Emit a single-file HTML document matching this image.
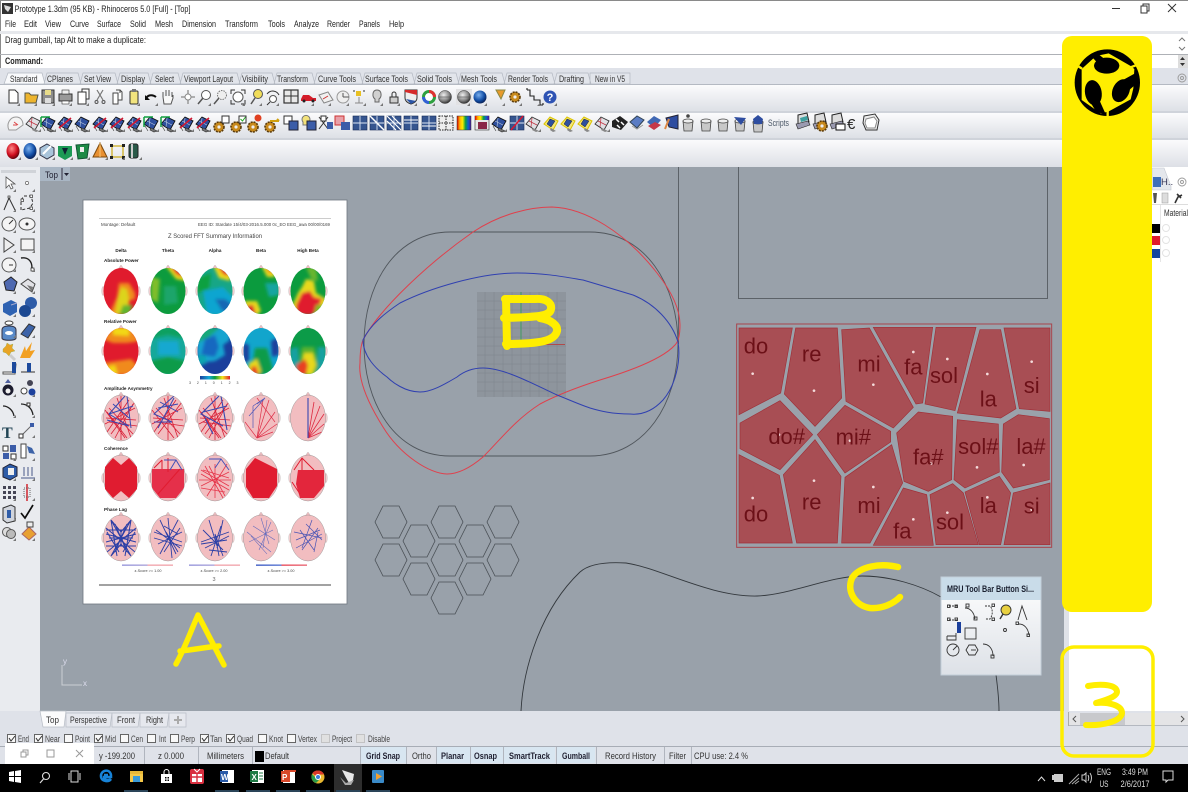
<!DOCTYPE html>
<html><head><meta charset="utf-8"><title>Prototype</title>
<style>
html,body{margin:0;padding:0;background:#fff;width:1188px;height:792px;overflow:hidden}
svg{display:block;filter:blur(.35px)}
text{font-family:"Liberation Sans",sans-serif;fill:#222}
.m{font-size:9.5px}
.t{font-size:9px;fill:#333}
.o{font-size:9px;fill:#444}
.s{font-size:9.5px;fill:#333}
.b{font-size:9.5px;font-weight:bold;fill:#223}
.h{font-size:4.6px;font-weight:bold;fill:#222}
.n{font-size:66px;fill:#6c1017;text-anchor:middle}
</style></head><body>
<svg width="1188" height="792" viewBox="0 0 1188 792" xmlns="http://www.w3.org/2000/svg">
<defs>
<linearGradient id="tb" x1="0" y1="0" x2="0" y2="1"><stop offset="0" stop-color="#fbfbfc"/><stop offset="1" stop-color="#dde0e6"/></linearGradient>
<linearGradient id="pop" x1="0" y1="0" x2="0" y2="1"><stop offset="0" stop-color="#fff"/><stop offset="1" stop-color="#dde1e7"/></linearGradient>
<linearGradient id="cb" x1="0" y1="0" x2="1" y2="0"><stop offset="0" stop-color="#1a3f9c"/><stop offset=".3" stop-color="#12a9d8"/><stop offset=".5" stop-color="#0a9c3c"/><stop offset=".75" stop-color="#f6e61a"/><stop offset="1" stop-color="#e01b2d"/></linearGradient>
<linearGradient id="rb" x1="0" y1="0" x2="1" y2="0"><stop offset="0" stop-color="#dd0000"/><stop offset=".2" stop-color="#ffb000"/><stop offset=".4" stop-color="#ffee00"/><stop offset=".6" stop-color="#10a040"/><stop offset=".8" stop-color="#1060d0"/><stop offset="1" stop-color="#501090"/></linearGradient>
<linearGradient id="lg1" x1="0" y1="0" x2="1" y2="0"><stop offset="0" stop-color="#8e8ed8"/><stop offset=".5" stop-color="#a8a0d8"/><stop offset=".5" stop-color="#f0a0a8"/><stop offset="1" stop-color="#f0a0a8"/></linearGradient>
<linearGradient id="lg2" x1="0" y1="0" x2="1" y2="0"><stop offset="0" stop-color="#3050c0"/><stop offset=".5" stop-color="#5070d0"/><stop offset=".5" stop-color="#e8404f"/><stop offset="1" stop-color="#e8606f"/></linearGradient>
<radialGradient id="sg" cx=".4" cy=".35" r=".7"><stop offset="0" stop-color="#eee"/><stop offset=".6" stop-color="#888"/><stop offset="1" stop-color="#222"/></radialGradient>
<radialGradient id="sb" cx=".4" cy=".35" r=".7"><stop offset="0" stop-color="#7ab0ee"/><stop offset=".6" stop-color="#1450a8"/><stop offset="1" stop-color="#04184a"/></radialGradient>
<radialGradient id="sr" cx=".4" cy=".35" r=".7"><stop offset="0" stop-color="#f88"/><stop offset=".6" stop-color="#d01020"/><stop offset="1" stop-color="#500008"/></radialGradient>
<filter id="bl" x="-20%" y="-20%" width="140%" height="140%"><feGaussianBlur stdDeviation="1.500"/></filter>
<filter id="sf" x="-5%" y="-5%" width="110%" height="110%"><feGaussianBlur stdDeviation=".3"/></filter>
<clipPath id="hc"><ellipse cx="0" cy="0" rx="17.5" ry="23"/></clipPath>

<path id="fl" d="M8 8H5L8 5Z" fill="#777"/>
<g id="srf"><path d="M-7 0L-1-7 7-3 2 6Z" fill="#2f4f9e" stroke="#111" stroke-width=".9"/><path d="M-4-3L4 1M-1-6L-2 3" stroke="#bcd" stroke-width=".6" fill="none"/><path d="M0 4L6 7 3 8-1 6ZM-6 2L-3 7" fill="#777" stroke="#333" stroke-width=".6"/><use href="#fl"/></g>
<g id="srfr"><use href="#srf"/><path d="M-6 4L6-6" stroke="#d01830" stroke-width="1.600"/></g>
<g id="srfg"><use href="#srf"/><path d="M-7-7H2M-7-7V3" stroke="#10a040" stroke-width="1.500" fill="none"/></g>
<g id="srfy"><path d="M-7 0L-1-7 7-3 2 6Z" fill="#f3e67a" stroke="#dcc400" stroke-width="1"/><path d="M-4 0L-1-5 4-3 0 3Z" fill="#2f4f9e" stroke="#222" stroke-width=".5"/><path d="M0 4L5 7 2 8-1 6Z" fill="#888"/></g>
<g id="srfw"><path d="M-7 0L-1-7 7-3 2 6Z" fill="#e0e0e4" stroke="#333" stroke-width=".9"/><path d="M-4-3L4 1M-1-6L-2 3" stroke="#c03040" stroke-width=".7" fill="none"/><path d="M0 4L6 7 3 8-1 6Z" fill="#888"/><use href="#fl"/></g>
<g id="grd"><rect x="-7" y="-7" width="14" height="14" fill="#34558f" stroke="#1a2b55" stroke-width=".6"/><path d="M0-7V7M-7 0H7" stroke="#dde6f4" stroke-width=".9"/></g>
<g id="gear"><circle cx="0" cy="0" r="5" fill="#c88a1e" stroke="#5a3a08" stroke-width="1.600" stroke-dasharray="2 1"/><circle cx="0" cy="0" r="1.600" fill="#eee"/></g>
<g id="cup"><path d="M-5-3H5L4 7H-4Z" fill="#c8c8c8" stroke="#444" stroke-width=".8"/><ellipse cx="0" cy="-3" rx="5" ry="2" fill="#eee" stroke="#444" stroke-width=".7"/></g>
<g id="hd"><path d="M-2.5-22.5L0-26 2.5-22.5Z" fill="#f2bdc0" stroke="#999" stroke-width=".3"/><ellipse cx="-18" cy="0" rx="1.300" ry="4.500" fill="#f4cfd0" stroke="#aaa" stroke-width=".3"/><ellipse cx="18" cy="0" rx="1.300" ry="4.500" fill="#f4cfd0" stroke="#aaa" stroke-width=".3"/><ellipse cx="0" cy="0" rx="17.5" ry="23" fill="#f2bdc0" stroke="#888" stroke-width=".4"/></g>
<g id="hm"><path d="M-2.5-22.5L0-26 2.5-22.5Z" fill="#f2bdc0" stroke="#999" stroke-width=".3"/><ellipse cx="-18" cy="0" rx="1.300" ry="4.500" fill="#f4cfd0" stroke="#aaa" stroke-width=".3"/><ellipse cx="18" cy="0" rx="1.300" ry="4.500" fill="#f4cfd0" stroke="#aaa" stroke-width=".3"/></g>
<path id="hex" d="M-16 0L-8-16H8L16 0 8 16H-8Z" fill="none" stroke="#4a5056" stroke-width=".8"/>
</defs>

<!-- base -->
<rect width="1188" height="792" fill="#fff"/>
<rect y="0" width="1188" height="1" fill="#8a8a8a"/>
<rect x="0" y="0" width="1" height="764" fill="#8a8a8a"/>
<rect y="31" width="1188" height="3" fill="#e6e8ec"/>
<rect y="54" width="1188" height="1" fill="#aeb1b6"/>
<rect y="68" width="1188" height="17" fill="#dfe2e9"/>
<rect y="84" width="1188" height="1" fill="#b4b9c2"/>
<rect y="85" width="1188" height="26" fill="url(#tb)"/>
<rect y="111" width="1188" height="2" fill="#cfd3da"/>
<rect y="113" width="1188" height="25" fill="url(#tb)"/>
<rect y="138" width="1188" height="2" fill="#cfd3da"/>
<rect y="140" width="1188" height="27" fill="url(#tb)"/>
<rect y="167" width="40" height="544" fill="#e9ebef"/>
<rect x="1" y="170" width="35" height="3" fill="#d0d3d8"/>
<rect x="40" y="167" width="1024" height="544" fill="#99a1aa"/>
<rect x="1064" y="167" width="5" height="558" fill="#dfe2e8"/>
<rect x="1069" y="167" width="119" height="558" fill="#fff"/>
<rect y="711" width="1188" height="36" fill="#dfe2e9"/>
<rect x="1069" y="713" width="119" height="12" fill="#e4e4e6"/>
<rect x="1080" y="713" width="45" height="12" fill="#c8c9cc"/>
<rect x="1068" y="712" width="1" height="14" fill="#aaa"/>
<rect x="1069" y="725" width="119" height="1" fill="#b4b8c0"/>
<path d="M1076 716l-3 3 3 3M1181 716l3 3-3 3" stroke="#555" fill="none"/>
<rect y="746" width="1188" height="18" fill="#dfe2e9"/>
<rect y="746" width="1188" height="1" fill="#a8adb6"/>

<!-- title / menu -->
<g>
<rect x="2" y="3" width="11" height="11" fill="#333"/><path d="M4 5L11 7 8 12 5 9Z" fill="#ddd"/>
<text class="m" x="14.500" y="12" textLength="176" lengthAdjust="spacingAndGlyphs">Prototype 1.3dm (95 KB) - Rhinoceros 5.0 [Full] - [Top]</text>
<path d="M1112 8.500h8" stroke="#333"/><path d="M1141 6h6v7h-6zM1143 6V4h6v7h-2" stroke="#333" fill="#fff"/><path d="M1168 4l8 8M1176 4l-8 8" stroke="#333"/>
<text class="m" x="5" y="27" textLength="11" lengthAdjust="spacingAndGlyphs">File</text>
<text class="m" x="24" y="27" textLength="13" lengthAdjust="spacingAndGlyphs">Edit</text>
<text class="m" x="45" y="27" textLength="16" lengthAdjust="spacingAndGlyphs">View</text>
<text class="m" x="70" y="27" textLength="19" lengthAdjust="spacingAndGlyphs">Curve</text>
<text class="m" x="97" y="27" textLength="24" lengthAdjust="spacingAndGlyphs">Surface</text>
<text class="m" x="130" y="27" textLength="16" lengthAdjust="spacingAndGlyphs">Solid</text>
<text class="m" x="155" y="27" textLength="18" lengthAdjust="spacingAndGlyphs">Mesh</text>
<text class="m" x="182" y="27" textLength="34" lengthAdjust="spacingAndGlyphs">Dimension</text>
<text class="m" x="225" y="27" textLength="33" lengthAdjust="spacingAndGlyphs">Transform</text>
<text class="m" x="268" y="27" textLength="17" lengthAdjust="spacingAndGlyphs">Tools</text>
<text class="m" x="294" y="27" textLength="25" lengthAdjust="spacingAndGlyphs">Analyze</text>
<text class="m" x="327" y="27" textLength="23" lengthAdjust="spacingAndGlyphs">Render</text>
<text class="m" x="359" y="27" textLength="21" lengthAdjust="spacingAndGlyphs">Panels</text>
<text class="m" x="389" y="27" textLength="15" lengthAdjust="spacingAndGlyphs">Help</text>
<text class="m" x="5" y="43" textLength="141" lengthAdjust="spacingAndGlyphs">Drag gumball, tap Alt to make a duplicate:</text>
<text class="m" x="5" y="64" textLength="38" lengthAdjust="spacingAndGlyphs" style="font-weight:bold">Command:</text>
<path d="M1179 41l3-3 3 3M1179 47l3 3 3-3" stroke="#777" fill="none"/>
<rect x="1178" y="55" width="10" height="13" fill="#ddd"/><path d="M1180 60l2.500-3 2.500 3ZM1180 63l2.500 3 2.500-3Z" fill="#333"/>
</g>

<!-- tabs -->
<g>
<path d="M4 84L8 73H42L45 84Z" fill="#f8f9fb" stroke="#b4b9c2" stroke-width=".7"/>
<path d="M44 84L47 73H78L81 84ZM80 84L83 73H115L118 84ZM117 84L120 73H148L151 84ZM150 84L153 73H178L181 84ZM180 84L183 73H237L240 84ZM239 84L242 73H272L275 84ZM274 84L277 73H312L315 84ZM314 84L317 73H360L363 84ZM362 84L365 73H412L415 84ZM414 84L417 73H456L459 84ZM458 84L461 73H502L505 84ZM504 84L507 73H552L555 84ZM554 84L557 73H588L591 84ZM590 84V73H630V84Z" fill="#e2e5eb" stroke="#b4b9c2" stroke-width=".7"/>
<text class="t" x="10" y="82" textLength="27.500" lengthAdjust="spacingAndGlyphs">Standard</text>
<text class="t" x="47" y="82" textLength="26" lengthAdjust="spacingAndGlyphs">CPlanes</text>
<text class="t" x="84" y="82" textLength="27" lengthAdjust="spacingAndGlyphs">Set View</text>
<text class="t" x="121" y="82" textLength="24" lengthAdjust="spacingAndGlyphs">Display</text>
<text class="t" x="155" y="82" textLength="19" lengthAdjust="spacingAndGlyphs">Select</text>
<text class="t" x="184" y="82" textLength="49" lengthAdjust="spacingAndGlyphs">Viewport Layout</text>
<text class="t" x="242" y="82" textLength="26" lengthAdjust="spacingAndGlyphs">Visibility</text>
<text class="t" x="277" y="82" textLength="31" lengthAdjust="spacingAndGlyphs">Transform</text>
<text class="t" x="318" y="82" textLength="38" lengthAdjust="spacingAndGlyphs">Curve Tools</text>
<text class="t" x="365" y="82" textLength="43" lengthAdjust="spacingAndGlyphs">Surface Tools</text>
<text class="t" x="417" y="82" textLength="35" lengthAdjust="spacingAndGlyphs">Solid Tools</text>
<text class="t" x="461" y="82" textLength="36" lengthAdjust="spacingAndGlyphs">Mesh Tools</text>
<text class="t" x="508" y="82" textLength="40" lengthAdjust="spacingAndGlyphs">Render Tools</text>
<text class="t" x="559" y="82" textLength="25" lengthAdjust="spacingAndGlyphs">Drafting</text>
<text class="t" x="595" y="82" textLength="30" lengthAdjust="spacingAndGlyphs">New in V5</text>
<g fill="none" stroke="#999" stroke-width=".9"><circle cx="1182" cy="78" r="4"/><circle cx="1182" cy="78" r="1.500"/><circle cx="1182" cy="182" r="4"/><circle cx="1182" cy="182" r="1.500"/></g>
</g>

<!-- toolbar row 1 -->
<g filter="url(#sf)">
<path d="M9 90h6l3 3v10H9Z" fill="#fff" stroke="#333"/>
<path d="M25 93h4l2 2h7l-2 8H25Z" fill="#edb42e" stroke="#554"/>
<rect x="42" y="90" width="12" height="13" fill="#8d8d8d" stroke="#333"/><rect x="45" y="90" width="6" height="5" fill="#e8dc8a"/><rect x="45" y="98" width="6" height="5" fill="#ddd"/>
<rect x="59" y="94" width="13" height="7" fill="#999" stroke="#333"/><rect x="62" y="90" width="7" height="4" fill="#eee" stroke="#333" stroke-width=".6"/><rect x="62" y="101" width="7" height="3" fill="#fff" stroke="#333" stroke-width=".6"/>
<path d="M78 92h8v12h-8ZM82 92v-3h7v10h-3" fill="#fff" stroke="#333"/>
<path d="M97 90l6 10M103 90l-6 10" stroke="#777" stroke-width="1.200"/><circle cx="96.500" cy="102" r="1.500" fill="none" stroke="#555"/><circle cx="103.500" cy="102" r="1.500" fill="none" stroke="#555"/>
<path d="M113 93h5v11h-5ZM116 90h4v3M120 90l2 2v8h-4" fill="#fff" stroke="#444"/>
<rect x="130" y="91" width="8" height="13" rx="1" fill="#f2e47e" stroke="#333"/><rect x="132" y="89" width="4" height="3" fill="#777"/>
<path d="M146 99c1-4 6-5 10-2" fill="none" stroke="#111" stroke-width="2"/><path d="M145 95v5h5Z" fill="#111"/>
<path d="M163 97v-5M166 96v-6M169 96v-6M172 97v-5M163 97l1 7h7l2-6v-3" fill="#f8f8f8" stroke="#555"/>
<path d="M188 90v14M181 97h14" stroke="#999" stroke-width="1.500"/><circle cx="188" cy="97" r="3" fill="#fff" stroke="#888"/>
<circle cx="206" cy="95" r="4.500" fill="#fff" stroke="#555"/><path d="M203 98l-5 6" stroke="#555" stroke-width="1.500"/>
<circle cx="222" cy="95" r="4.500" fill="#eee" stroke="#777" stroke-dasharray="1.500 1"/><path d="M219 98l-5 6" stroke="#555" stroke-width="1.500"/>
<circle cx="238" cy="97" r="5" fill="#fff" stroke="#555"/><path d="M231 94v-4h4M245 94v-4h-4M231 100v4h4M245 100v4h-4" stroke="#333" fill="none"/>
<circle cx="258" cy="94" r="4.500" fill="#f1dd5a" stroke="#555"/><path d="M255 98l-4 6" stroke="#555" stroke-width="1.500"/>
<path d="M267 94c4-5 10-3 12 1" fill="none" stroke="#333"/><circle cx="273" cy="99" r="3.500" fill="#fff" stroke="#555"/><path d="M270 102l-3 3" stroke="#333"/>
<rect x="284" y="90" width="14" height="13" fill="#e8e8e8" stroke="#333" stroke-width="1.200"/><path d="M291 90v13M284 96h14" stroke="#333"/>
<path d="M301 99l2-4h6l4 3h3v3h-15Z" fill="#d41f2c"/><circle cx="304" cy="101" r="1.500" fill="#222"/><circle cx="313" cy="101" r="1.500" fill="#222"/>
<path d="M319 95l9-3 5 8-9 3Z" fill="#f0f0f0" stroke="#888"/><path d="M323 99l5-3" stroke="#c33"/>
<circle cx="343" cy="97" r="6" fill="#eee" stroke="#999"/><path d="M343 97h6M343 93v4" stroke="#555"/>
<rect x="356" y="91" width="5" height="5" fill="#e8c020"/><path d="M359 97v6M355 103h8" stroke="#888"/><path d="M364 90v2M354 90v2" stroke="#333"/>
<path d="M377 90c-5 0-5 7-2 9v3h4v-3c3-2 3-9-2-9Z" fill="#d0d0d0" stroke="#666"/>
<rect x="390" y="97" width="8" height="6" fill="#ccc" stroke="#333"/><path d="M392 97v-3a2 2 0 0 1 4 0v3" fill="none" stroke="#333"/>
<path d="M405 90h12v8c0 3-3 5-6 6-3-1-6-3-6-6Z" fill="#eee" stroke="#333"/><path d="M405 92l12 3v-5h-12Z" fill="#d52a2a"/><path d="M406 99l10 2-5 3Z" fill="#2a55a8"/>
<circle cx="429" cy="97" r="5.500" fill="#fff" stroke="#2da040" stroke-width="3"/><path d="M429 91.500a5.500 5.500 0 0 1 5.500 5.500" fill="none" stroke="#e03030" stroke-width="3"/><path d="M423.500 97a5.500 5.500 0 0 0 5.500 5.500" fill="none" stroke="#3060d8" stroke-width="3"/>
<circle cx="445" cy="97" r="6.500" fill="url(#sg)" stroke="#333" stroke-width=".5"/><path d="M438.500 97h13" stroke="#444" stroke-width=".5"/>
<rect x="456" y="89" width="16" height="16" fill="#e2e2e4"/><circle cx="464" cy="97" r="6.500" fill="url(#sg)" stroke="#333" stroke-width=".5"/><path d="M457.500 97h13" stroke="#444" stroke-width=".5"/>
<circle cx="480" cy="97" r="6.500" fill="url(#sb)"/>
<path d="M496 90h9l-4 9Z" fill="#e89a2c" stroke="#884"/>
<use href="#gear" x="515" y="97"/>
<path d="M527 90h3v6h4v4h6v5h3M527 90v-2M543 105v-2" fill="none" stroke="#222" stroke-width="1.100"/>
<circle cx="550" cy="97" r="6.500" fill="#2e53b4"/><text x="550" y="101" style="font-size:11px;font-weight:bold;fill:#fff" text-anchor="middle">?</text>
<g fill="#777"><path d="M20 106h-3l3-3ZM37 106h-3l3-3ZM55 106h-3l3-3ZM72 106h-3l3-3ZM89 106h-3l3-3ZM140 106h-3l3-3ZM158 106h-3l3-3ZM211 106h-3l3-3ZM245 106h-3l3-3ZM262 106h-3l3-3ZM279 106h-3l3-3ZM314 106h-3l3-3ZM331 106h-3l3-3ZM349 106h-3l3-3ZM366 106h-3l3-3ZM383 106h-3l3-3ZM400 106h-3l3-3ZM417 106h-3l3-3ZM435 106h-3l3-3ZM470 106h-3l3-3ZM487 106h-3l3-3ZM505 106h-3l3-3ZM522 106h-3l3-3ZM540 106h-3l3-3ZM557 106h-3l3-3Z"/></g>
</g>

<!-- toolbar row 2 -->
<g filter="url(#sf)">
<path d="M9 130c-3-6 1-13 7-13 5 0 7 4 7 8l-7 5Z" fill="#f4f4f4" stroke="#999"/><path d="M14 122l4 3M13 125h4" stroke="#d44" fill="none"/>
<use href="#srfw" x="33" y="124"/>
<use href="#srfg" x="48" y="124"/><use href="#srfr" x="65" y="124"/><use href="#srf" x="82" y="124"/><use href="#srfr" x="100" y="124"/><use href="#srfr" x="117" y="124"/><use href="#srfr" x="134" y="124"/><use href="#srfg" x="151" y="124"/><use href="#srfg" x="168" y="124"/><use href="#srfr" x="186" y="124"/><use href="#srfr" x="203" y="124"/>
<use href="#gear" x="219" y="127"/><rect x="222" y="116" width="7" height="7" fill="#fff" stroke="#333"/>
<use href="#gear" x="236" y="127"/><rect x="239" y="116" width="7" height="7" fill="#fff" stroke="#333"/><path d="M240.500 119l2 2 3-4" stroke="#2a2" fill="none"/>
<use href="#gear" x="253" y="127"/><circle cx="258" cy="118" r="3.500" fill="#e04020"/>
<use href="#gear" x="270" y="127"/><path d="M270 121h9M277 119l2 2" stroke="#d0a010" stroke-width="2"/>
<rect x="284" y="116" width="8" height="8" fill="#fff" stroke="#333"/><rect x="289" y="121" width="9" height="9" fill="#3b5ba8" stroke="#223"/>
<path d="M303 122a4 4 0 1 1 6 0v3h-6Z" fill="#f3e27a" stroke="#777"/><rect x="307" y="121" width="9" height="9" fill="#3b5ba8" stroke="#223"/>
<path d="M319 117l9 12M328 117l-9 12" stroke="#333"/><rect x="321" y="116" width="5" height="5" fill="#fff" stroke="#333"/><rect x="327" y="122" width="6" height="7" fill="#3b5ba8"/>
<rect x="335" y="116" width="9" height="9" fill="#e8a0a8" stroke="#c33"/><rect x="341" y="122" width="9" height="8" fill="#3b5ba8"/>
<use href="#grd" x="360" y="123"/>
<use href="#grd" x="377" y="123"/><path d="M370 116l14 14" stroke="#fff" stroke-width="1.500"/>
<use href="#grd" x="394" y="123"/><path d="M387 116l14 14M392 116l9 9M387 121l9 9" stroke="#fff" stroke-width="1.200"/>
<use href="#grd" x="411" y="123"/><path d="M404 120h14" stroke="#fff"/>
<use href="#grd" x="429" y="123"/><path d="M422 126h14" stroke="#fff"/>
<rect x="439" y="116" width="14" height="14" fill="#eee" stroke="#222" stroke-dasharray="1.500 1"/><path d="M446 116v14M439 123h14" stroke="#222" stroke-dasharray="1.500 1"/>
<rect x="457" y="116" width="14" height="14" fill="url(#rb)" stroke="#333" stroke-width=".5"/>
<rect x="475" y="116" width="14" height="14" fill="#e7e7e7" stroke="#333" stroke-width=".6"/><rect x="478" y="122" width="9" height="7" fill="#8a2545"/><rect x="475" y="116" width="14" height="4" fill="url(#rb)"/>
<use href="#srf" x="499" y="124"/>
<use href="#grd" x="517" y="123"/><path d="M511 130l12-14" stroke="#d81830" stroke-width="1.500"/>
<use href="#srfw" x="533" y="124"/><use href="#srfy" x="551" y="124"/><use href="#srfy" x="568" y="124"/><use href="#srfy" x="585" y="124"/><use href="#srfw" x="602" y="124"/>
<path d="M612 121l8-5 8 6-7 8-9-3Z" fill="#222"/><path d="M616 119l3 3M621 122l3 3M617 125l3 3" stroke="#fff" stroke-width="1.500"/>
<path d="M630 122l7-6 7 4-7 8Z" fill="#5a7cc4" stroke="#345"/><path d="M632 126l5 3 6-4" stroke="#999" fill="none"/>
<path d="M647 122l7-6 7 4-7 8Z" fill="#3f68b4"/><path d="M648 126l6 4 7-5-6-3Z" fill="#c43848"/>
<path d="M666 118l12-3v14l-9-2Z" fill="#2e4da0" stroke="#223"/><path d="M665 129l4-10" stroke="#d84" stroke-width="2"/>
<use href="#cup" x="688" y="124"/><circle cx="688" cy="116" r="1.800" fill="#444"/>
<use href="#cup" x="706" y="124"/><use href="#cup" x="723" y="124"/>
<use href="#cup" x="740" y="124"/><path d="M734 117l12 1-5 7Z" fill="#2e4da0"/>
<use href="#cup" x="758" y="125"/><path d="M758 115l5 4-1 5h-8l-1-5Z" fill="#2e4da0"/>
<text x="768" y="126" style="font-size:9px;fill:#4a5666" textLength="21" lengthAdjust="spacingAndGlyphs">Scripts</text>
<path d="M798 115l9-2 2 9-11 3Z" fill="#ddd" stroke="#222"/><path d="M800 118l7-2 1 4-7 2Z" fill="#3ca0a0"/><path d="M796 124l12-3 2 4-12 4Z" fill="#9a9ab0" stroke="#222" stroke-width=".6"/>
<path d="M815 115l9-2 2 9-11 3Z" fill="#ddd" stroke="#222"/><path d="M813 124l12-3 2 4-12 4Z" fill="#9a9ab0" stroke="#222" stroke-width=".6"/><use href="#gear" x="822" y="126"/>
<path d="M832 115l9-2 2 9-11 3Z" fill="#ddd" stroke="#222"/><path d="M830 124l12-3 2 4-12 4Z" fill="#9a9ab0" stroke="#222" stroke-width=".6"/><rect x="836" y="124" width="9" height="6" fill="#fff" stroke="#111"/>
<text x="847" y="129" style="font-size:15px;fill:#222">€</text>
<path d="M864 116l11-2 4 6-2 10h-11l-3-7Z" fill="#eee" stroke="#333"/><path d="M866 119l8-2 3 4-2 7h-8l-2-5Z" fill="#fff" stroke="#888"/>
</g>

<!-- toolbar row 3 -->
<g filter="url(#sf)">
<ellipse cx="13" cy="151" rx="6.500" ry="8" fill="url(#sr)"/>
<ellipse cx="30" cy="151" rx="6.500" ry="8" fill="url(#sb)"/>
<path d="M47 144l7 4v7l-7 4-7-4v-7Z" fill="#a9c4da" stroke="#334"/><path d="M43 154l8-8" stroke="#fff" stroke-width="2"/>
<path d="M58 146h14v10l-7 4-7-4Z" fill="#1e9a55"/><path d="M62 148h6l-3 7Z" fill="#123"/>
<path d="M76 145l13-1-2 14-9 1Z" fill="#1e8a45" stroke="#153"/><rect x="80" y="147" width="4" height="5" fill="#eee"/>
<path d="M100 143l7 14H93Z" fill="#e89030" stroke="#7a4810"/><path d="M100 143v14" stroke="#f7c878"/>
<rect x="112" y="146" width="11" height="11" fill="none" stroke="#caa818" stroke-width="1.200"/><g fill="#222"><rect x="110" y="144" width="3" height="3"/><rect x="122" y="144" width="3" height="3"/><rect x="110" y="156" width="3" height="3"/><rect x="122" y="156" width="3" height="3"/></g>
<rect x="129" y="144" width="9" height="14" rx="2" fill="#2a5a4a" stroke="#222"/><rect x="131" y="144" width="2" height="14" fill="#ccc"/>
<g fill="#777"><path d="M21 160h-3l3-3ZM38 160h-3l3-3ZM55 160h-3l3-3ZM73 160h-3l3-3ZM90 160h-3l3-3ZM108 160h-3l3-3ZM125 160h-3l3-3ZM142 160h-3l3-3Z"/></g>
</g>

<!-- left toolbar -->
<g filter="url(#sf)">
<path d="M6 177v11l3-3 2 4 2-1-2-4h4Z" fill="#fff" stroke="#555" stroke-width=".8"/><circle cx="27" cy="183" r="1.600" fill="#fff" stroke="#666" stroke-width=".7"/>
<path d="M4 210l5-12 6 12" fill="none" stroke="#333"/><path d="M21 210v-10l3-4h7l2 7-3 5Z" fill="none" stroke="#333" stroke-dasharray="3 2"/><g fill="#fff" stroke="#333" stroke-width=".7"><rect x="8" y="196" width="2" height="2"/><rect x="21" y="199" width="2.500" height="2.500"/><rect x="30" y="195" width="2.500" height="2.500"/><rect x="30" y="207" width="2.500" height="2.500"/></g>
<circle cx="9" cy="224" r="7" fill="#f4f4f4" stroke="#555"/><path d="M9 224l4-4" stroke="#333"/><ellipse cx="27" cy="224" rx="8" ry="6" fill="#f4f4f4" stroke="#555"/><circle cx="27" cy="224" r="1.500" fill="#333"/>
<path d="M4 238v14l10-7Z" fill="#eee" stroke="#444"/><rect x="21" y="239" width="13" height="11" fill="#f4f4f4" stroke="#444"/>
<circle cx="9" cy="265" r="7" fill="#f4f4f4" stroke="#555"/><path d="M9 265h4" stroke="#333"/><path d="M21 258c6-1 11 2 11 10" fill="none" stroke="#222" stroke-width="1.400"/><rect x="31" y="268" width="3" height="3" fill="#fff" stroke="#222" stroke-width=".7"/>
<path d="M4 282l7-5 6 5-3 9-8-1Z" fill="#5069b0" stroke="#222"/><path d="M21 284l7-5 7 5-3 8Z" fill="#e2e2e6" stroke="#444"/><path d="M27 285l6 2-1 5" fill="#777"/>
<path d="M3 304l8-4 6 3v9l-7 4-7-4Z" fill="#2d62b2"/><path d="M11 305l6-2" stroke="#aac"/>
<circle cx="31" cy="303" r="6" fill="#2d5ca8"/><circle cx="25" cy="311" r="6" fill="#1f4a92"/><ellipse cx="9" cy="323" rx="4" ry="2" fill="#fff" stroke="#444"/>
<path d="M2 330c0-3 3-4 7-4s7 1 7 4v8c0 3-14 3-14 0Z" fill="#5a8ac8" stroke="#334"/><ellipse cx="9" cy="333" rx="4" ry="2" fill="#fff"/>
<path d="M21 334l8-10 6 3-7 11Z" fill="#3c64a8" stroke="#333"/>
<path d="M3 349l3-3 1-3 3 2 3-1-1 4 3 3-4 1-2 4-3-3-3-1Z" fill="#e8a428" stroke="#7a4" stroke-width=".3"/><path d="M10 355l5 5" stroke="#ccc" stroke-width="3"/>
<path d="M20 358l5-12 1 5 6-9-2 9 5-1-5 8Z" fill="#f2a020"/>
<path d="M3 372h10v-8h3l-1 10H3Z" fill="#fff" stroke="#555"/><path d="M12 362h4v11h-4Z" fill="#1e4a9c"/><path d="M21 372h14" stroke="#333"/><path d="M27 363h4v9h-4Z" fill="#1e4a9c"/>
<circle cx="8" cy="390" r="5.500" fill="#1a1a2e"/><path d="M5 383l3-4 3 4" fill="#5060a0"/><circle cx="8" cy="391" r="2.500" fill="#f0f0f0"/>
<circle cx="30" cy="383" r="3" fill="#445"/><circle cx="24" cy="391" r="3" fill="#fff" stroke="#444"/><circle cx="32" cy="392" r="3.500" fill="#1a3f9c"/>
<path d="M3 406c5 0 10 4 11 10" fill="none" stroke="#222" stroke-width="1.300"/><path d="M21 404c6 0 11 4 12 11" fill="none" stroke="#222" stroke-width="1.300"/><rect x="27" y="403" width="3" height="3" fill="#fff" stroke="#333"/>
<text x="2" y="438" style="font-size:16px;font-weight:bold;font-family:'Liberation Serif',serif;fill:#245">T</text>
<path d="M21 436l12-12" stroke="#666"/><rect x="19" y="434" width="4" height="4" fill="#fff" stroke="#333"/><rect x="30" y="423" width="4" height="4" fill="#3b5ba8"/>
<rect x="3" y="446" width="5" height="5" fill="#fff" stroke="#333"/><rect x="10" y="445" width="6" height="7" fill="#3b5ba8"/><rect x="3" y="453" width="6" height="6" fill="#3b5ba8"/><rect x="11" y="454" width="5" height="5" fill="#fff" stroke="#333"/>
<path d="M21 444h5v14h-5Z" fill="#fff" stroke="#444"/><path d="M27 446l5 2 3 6-6-1Z" fill="#3c64a8"/>
<path d="M3 468l7-4 7 3v9l-7 4-7-3Z" fill="#2d5ca8" stroke="#223"/><rect x="8" y="468" width="6" height="7" fill="#eee"/>
<path d="M21 478h14M24 476v-9M28 476v-9M32 476v-9" stroke="#4a5a88"/>
<g fill="#445"><rect x="3" y="486" width="3" height="3"/><rect x="8" y="486" width="3" height="3"/><rect x="13" y="486" width="3" height="3"/><rect x="3" y="491" width="3" height="3"/><rect x="8" y="491" width="3" height="3"/><rect x="13" y="491" width="3" height="3"/><rect x="3" y="496" width="3" height="3"/><rect x="8" y="496" width="3" height="3"/><rect x="13" y="496" width="3" height="3"/></g>
<path d="M27 484v17" stroke="#d01820" stroke-width="1.400"/><rect x="24" y="488" width="6" height="9" fill="none" stroke="#666" stroke-dasharray="1 1"/>
<path d="M3 508l8-3 4 2v14l-8 2-4-3Z" fill="#d0d4dc" stroke="#333"/><path d="M7 510h4v8H7Z" fill="#2d5ca8"/>
<path d="M21 513l4 5 8-13" fill="none" stroke="#111" stroke-width="1.700"/>
<circle cx="7" cy="532" r="4.500" fill="#ddd" stroke="#555"/><circle cx="11" cy="534" r="4.500" fill="#bbb" stroke="#555"/>
<path d="M22 534l7-7 7 7-7 6Z" fill="#e8a030" stroke="#a66"/><rect x="27" y="522" width="6" height="5" fill="#eee" stroke="#444"/>
<g fill="#777"><path d="M16 192h-3l3-3ZM35 192h-3l3-3ZM16 212h-3l3-3ZM35 212h-3l3-3ZM16 233h-3l3-3ZM35 233h-3l3-3ZM16 253h-3l3-3ZM35 253h-3l3-3ZM16 272h-3l3-3ZM35 272h-3l3-3ZM16 294h-3l3-3ZM35 294h-3l3-3ZM16 317h-3l3-3ZM35 317h-3l3-3ZM16 338h-3l3-3ZM35 338h-3l3-3ZM16 397h-3l3-3ZM35 397h-3l3-3ZM16 418h-3l3-3ZM35 418h-3l3-3ZM35 438h-3l3-3ZM16 461h-3l3-3ZM35 461h-3l3-3ZM16 481h-3l3-3ZM35 481h-3l3-3ZM16 501h-3l3-3ZM35 501h-3l3-3ZM16 521h-3l3-3ZM16 541h-3l3-3ZM35 541h-3l3-3Z"/></g>
</g>

<!-- viewport tab -->
<rect x="40" y="167" width="30" height="14" fill="#a9b6c4"/>
<text x="45" y="178" style="font-size:9.5px;fill:#223" textLength="13" lengthAdjust="spacingAndGlyphs">Top</text>
<path d="M62 168v12" stroke="#334"/><path d="M64 173h5l-2.500 3Z" fill="#223"/>

<!-- page A -->
<rect x="83" y="200" width="264" height="404" fill="#fff" stroke="#6e7680" stroke-width=".8"/>
<rect x="99" y="218" width="232" height="1" fill="#ccc"/>
<text x="101" y="226" style="font-size:4.5px;fill:#444">Montage:  Default</text>
<text x="330" y="226" style="font-size:4.5px;fill:#444" text-anchor="end" textLength="132" lengthAdjust="spacingAndGlyphs">EEG ID:   Stardate 15/4/03-2016.5.000 0c_EO EEG_awa 00/00/0169</text>
<text x="215" y="238" style="font-size:6.500px;fill:#444" text-anchor="middle" textLength="94" lengthAdjust="spacingAndGlyphs">Z Scored FFT Summary Information</text>
<g text-anchor="middle"><text class="h" x="121" y="252">Delta</text><text class="h" x="168" y="252">Theta</text><text class="h" x="215" y="252">Alpha</text><text class="h" x="261" y="252">Beta</text><text class="h" x="308" y="252">High Beta</text></g>
<text class="h" x="104" y="262">Absolute Power</text>
<text class="h" x="104" y="323">Relative Power</text>
<text class="h" x="104" y="390">Amplitude Asymmetry</text>
<text class="h" x="104" y="450">Coherence</text>
<text class="h" x="104" y="511">Phase Lag</text>

<!-- heat maps row 1 -->
<g transform="translate(121 291)"><use href="#hm"/><g clip-path="url(#hc)"><rect x="-18" y="-24" width="36" height="48" fill="#e01b2d"/><g filter="url(#bl)"><path d="M-2-8L8-8 14 2 14 8 8 10 9 24-12 24-4 6Z" fill="#f08a1c"/><path d="M0-4L6-2 8 8 6 24-6 24-3 6Z" fill="#dcd41a"/><path d="M2 14H12L8 24H-2Z" fill="#62b52f"/></g></g></g>
<g transform="translate(168 291)"><use href="#hm"/><g clip-path="url(#hc)"><rect x="-18" y="-24" width="36" height="48" fill="#0c9b3e"/><g filter="url(#bl)"><path d="M-17-14L-8-12-10 12-17 8Z" fill="#7fbd2a"/><path d="M-3-26L16-26 18-10 8-12Z" fill="#f0d816"/><path d="M2-26H16L14-14 8-17Z" fill="#e01b2d"/><path d="M-4-5L8-5 10 12-4 14Z" fill="#1aa56a"/></g></g></g>
<g transform="translate(215 291)"><use href="#hm"/><g clip-path="url(#hc)"><rect x="-18" y="-24" width="36" height="48" fill="#17a686"/><g filter="url(#bl)"><path d="M-18-12L-4-18-6-2-18 2Z" fill="#10a040"/><path d="M-2-26H16L15-10 4-13Z" fill="#f0d816"/><path d="M3-25H16L13-15 8-17Z" fill="#e01b2d"/><path d="M-12 0L8-4 18 6 18 24-8 24Z" fill="#11a5d0"/><path d="M0 8L10 8 18 14 12 24 6 18Z" fill="#1668b4"/></g></g></g>
<g transform="translate(261 291)"><use href="#hm"/><g clip-path="url(#hc)"><rect x="-18" y="-24" width="36" height="48" fill="#0b9b3e"/><g filter="url(#bl)"><path d="M0-26H12L14-14 6-14Z" fill="#e8d81a"/><path d="M4-24H10L14-18 8-18Z" fill="#f08a1c"/><path d="M4-8H18V4L8 6Z" fill="#16a5a0"/><path d="M-16 10H-4L0 20-4 24H-18Z" fill="#e8d81a"/><path d="M-16 15L-8 14-5 24H-16Z" fill="#e01b2d"/></g></g></g>
<g transform="translate(308 291)"><use href="#hm"/><g clip-path="url(#hc)"><rect x="-18" y="-24" width="36" height="48" fill="#0b9b3e"/><g filter="url(#bl)"><path d="M-2-24H8L10-10 3-12Z" fill="#68b52e"/><path d="M-2-12L6-10 8 2 18 8 18 20-18 20-10 2-6-4Z" fill="#e8d81a"/><path d="M-6 2L2 0 6 6 14 8 10 16 4 24-12 24-12 14Z" fill="#e01b2d"/><path d="M8 14L16 14 12 24 6 24Z" fill="#7cb92a"/></g></g></g>
<!-- heat maps row 2 -->
<g transform="translate(121 351)"><use href="#hm"/><g clip-path="url(#hc)"><rect x="-18" y="-24" width="36" height="48" fill="#e01b2d"/><g filter="url(#bl)"><path d="M-18-12L-8-24 10-24 18-10 6-8-8-8Z" fill="#f08a1c"/><path d="M-8-24H8L8-15-8-16Z" fill="#f2d816"/><path d="M-18 12L10 8 16 14 8 24-18 24Z" fill="#f08a1c"/><path d="M-14 16L-6 14-3 24-14 24Z" fill="#f2d816"/></g></g></g>
<g transform="translate(168 351)"><use href="#hm"/><g clip-path="url(#hc)"><rect x="-18" y="-24" width="36" height="48" fill="#16a89a"/><g filter="url(#bl)"><path d="M-18-24H18V-12L0-16-18-12Z" fill="#0ea060"/><path d="M-18 10L0 6 18 10V24H-18Z" fill="#0c9b48"/><path d="M-10-10L10-10 12 4-10 4Z" fill="#18a8d0"/></g></g></g>
<g transform="translate(215 351)"><use href="#hm"/><g clip-path="url(#hc)"><rect x="-18" y="-24" width="36" height="48" fill="#1a3f9c"/><g filter="url(#bl)"><path d="M-18-24H18L14-10 8-6 10 4 0 10-18 12Z" fill="#12a4d0"/><path d="M-18-24H6L-6-14-18-8Z" fill="#14a878"/><path d="M-10-12L0-16 4-4 0 6-14 4Z" fill="#1668c0"/><path d="M-18 4L-10 4-8 12-18 16Z" fill="#10a5b0"/></g></g></g>
<g transform="translate(261 351)"><use href="#hm"/><g clip-path="url(#hc)"><rect x="-18" y="-24" width="36" height="48" fill="#12a5cc"/><g filter="url(#bl)"><path d="M-18-8L-12-6-12 10-18 12ZM18-14L10-10 11 6 18 4Z" fill="#1a3f9c"/><path d="M-6-3L6-3 12 18 8 24-12 24-8 10Z" fill="#0c9b48"/><path d="M-12 12L-4 8 0 20-2 24-14 24Z" fill="#e8d81a"/><path d="M-10 16L-5 15-2 24-10 24Z" fill="#e84820"/></g></g></g>
<g transform="translate(308 351)"><use href="#hm"/><g clip-path="url(#hc)"><rect x="-18" y="-24" width="36" height="48" fill="#0c9b48"/><g filter="url(#bl)"><path d="M-18-2L-10-4-8 24-18 24ZM18-4L10-4 8 24 18 24Z" fill="#14a0a0"/><path d="M-6-4H6L10 16 6 24H-10L-8 10Z" fill="#5ab22e"/><path d="M-4 2H5L8 14 4 24H-8Z" fill="#e8d81a"/><path d="M-12 14L-3 8 0 14-2 24-10 24Z" fill="#e84020"/></g></g></g>
<rect x="200" y="376" width="30" height="3.500" fill="url(#cb)"/>
<text x="215" y="384" style="font-size:3.500px;fill:#444" text-anchor="middle" letter-spacing="2.500">3 2 1 0 1 2 3</text>

<!-- amplitude asym -->
<g transform="translate(121 418)"><use href="#hd"/><g clip-path="url(#hc)" fill="none"><path d="M-15 0L15 2M-12-10L12 16M-4-20L10 20M8-18L-14 14M0-22V22M-16 6L14-10M-10 16L14-16M-14-6L6 20M-6 20L12-14M4 20L-16-8M-12 4L16 8" stroke="#d81f36" stroke-width=".8"/><path d="M4-22L-12-4 8 8-14 2M-12-4L12-12M6-22L10 10M-8-14L8 0" stroke="#3848b0" stroke-width="1"/></g></g>
<g transform="translate(168 418)"><use href="#hd"/><g clip-path="url(#hc)" fill="none"><path d="M-15 0L15 2M-12-10L12 16M-4-20L10 20M8-18L-14 14M0-22V22M-16 6L14-10M-10 16L14-16M6 20L-16-8M-12 4L16 8" stroke="#d81f36" stroke-width=".8"/><path d="M6-22L-14-4 4 4-14 4M-8-16L10-6M6-20L-10 10M-10-10L10-14" stroke="#3848b0" stroke-width="1"/></g></g>
<g transform="translate(215 418)"><use href="#hd"/><g clip-path="url(#hc)" fill="none"><path d="M-15 0L15 2M-12-10L12 16M-4-20L10 20M8-18L-14 14M0-22V22M-16 6L14-10M-10 16L14-16M-14-6L6 20M-6 20L12-14M4 20L-16-8M-12 4L16 8" stroke="#d81f36" stroke-width=".8"/><path d="M4-22L-14-4 8 8M-12-6L12-12M6-22L12 12M-10 0L-2 16" stroke="#3848b0" stroke-width="1.100"/></g></g>
<g transform="translate(261 418)"><use href="#hd"/><g clip-path="url(#hc)" fill="none"><path d="M-4 20L2-18M-4 20L8-18M-4 20L14-6M-4 20L16 6M-4 20L12 14M-16 4L-4 20M-4-20L14 4" stroke="#dd3048" stroke-width=".7"/><path d="M-8-12V10M-8-12L4-20M-4-14L4-20M-12-2L4-20" stroke="#5058b8" stroke-width=".7"/></g></g>
<g transform="translate(308 418)"><use href="#hd"/><g clip-path="url(#hc)" fill="none"><path d="M0 20L6-16M0 20L12-12M0 20L16-4M0 20L16 6M0 20L14 14M0 0V20" stroke="#dd2a40" stroke-width=".8"/><path d="M0-20V20" stroke="#3848b0" stroke-width="1.100"/></g></g>
<!-- coherence -->
<g transform="translate(121 478)"><use href="#hd"/><path d="M-16-11L-8-20 0-13 8-20 16-11V11L8 20 0 13-8 20-16 11Z" fill="#e01c30"/></g>
<g transform="translate(168 478)"><use href="#hd"/><g clip-path="url(#hc)"><path d="M-16-9H16V10L8 20-8 20-16 10Z" fill="#e5304a"/><path d="M-14-10L-6-18M-6-18V-9M0-20V-6M-10 16L12-9" stroke="#e01c30" fill="none"/><path d="M-4-18H8L14-8M8-18L2-8" stroke="#4050b8" fill="none"/></g></g>
<g transform="translate(215 478)"><use href="#hd"/><g clip-path="url(#hc)" fill="none"><path d="M-14-8L14 8M-14-4L14 12M-10-12L8 20M-14 8L14-6M-6-12L10 18M-16 2H16M-8 18L12-14M-12-8L14 0M0 -14V20M-14 10L10 14" stroke="#e5384c" stroke-width=".8"/><path d="M-6-19H6L14-8M6-19L0-10" stroke="#4050b8" stroke-width=".9"/></g></g>
<g transform="translate(261 478)"><use href="#hd"/><g clip-path="url(#hc)"><path d="M-15-9L-6-20 6-14 16-9V8L8 20-8 20-15 9Z" fill="#e01c30"/></g></g>
<g transform="translate(308 478)"><use href="#hd"/><g clip-path="url(#hc)"><path d="M-10-8H16V8L6 20-8 20-12 6Z" fill="#e3263c"/><path d="M-14-8L-6-20 6-8M-6-20V-8M-16 4L-8 16" stroke="#e01c30" fill="none"/></g></g>
<!-- phase lag -->
<g transform="translate(121 538)"><use href="#hd"/><g clip-path="url(#hc)" fill="none" stroke="#2c3fa6" stroke-width="1"><path d="M-10-18L-4 18M10-18L4 18M-15-8L15-8M-15 8L15 8M-15-4L15 4M-15 4L15-4M-10-18L10 18M10-18L-10 18M-10-18L0-6 10-18M-10 18L0 6 10 18M-15-10L14 14M15-10L-14 14M-12 0H12M-6-14L6 14M6-14L-6 14M0-8V8M-14-6L-2 14M14-6L2 14"/></g></g>
<g transform="translate(168 538)"><use href="#hd"/><g clip-path="url(#hc)" fill="none" stroke="#2c3fa6" stroke-width=".9"><path d="M-8-18L8 16M10-18L-8 16M-14-6L14 4M14-6L-10 6M0-20L4 20M-12-8L12 10M12-10L-4 14M-14 0L14 8M-4-12L10-4M-2-6L10 14"/></g></g>
<g transform="translate(215 538)"><use href="#hd"/><g clip-path="url(#hc)" fill="none" stroke="#2c3fa6" stroke-width=".9"><path d="M-6-18L2 8M8-18L2 10M-14 4L14-6M-14 6L12 2M-4 18L6-12M4 18L0-4M-12-8L8 12M-6 12L12 14M-10 10L14-2M0 -4L8 18"/></g></g>
<g transform="translate(261 538)"><use href="#hd"/><g clip-path="url(#hc)" fill="none" stroke="#6068bc" stroke-width=".55"><path d="M-14-6L10 14M-10-2L6 16M6-18L2 10M10-16L-2 12M-12 4L12-8M0-20L8 6M-8-12L14 2"/></g></g>
<g transform="translate(308 538)"><use href="#hd"/><g clip-path="url(#hc)" fill="none" stroke="#4a55b4" stroke-width=".7"><path d="M-14-6L14 0M-12 2L12-8M-6 12L10-10M-2-14L14 2M4-18L-6 10M-12 10L14-4M6 14L10-6M-8-8L6 12"/></g></g>
<rect x="122" y="564.500" width="51" height="1.300" fill="url(#lg1)"/><rect x="189" y="564.500" width="51" height="1.300" fill="url(#lg1)"/><rect x="256" y="564.500" width="51" height="1.300" fill="url(#lg2)"/>
<g style="font-size:3.800px" text-anchor="middle"><text x="148" y="572" style="font-size:3.800px;fill:#444">z-Score >= 1.00</text><text x="214" y="572" style="font-size:3.800px;fill:#444">z-Score >= 2.00</text><text x="281" y="572" style="font-size:3.800px;fill:#444">z-Score >= 3.00</text><text x="214" y="581" style="font-size:5.500px;fill:#666">3</text></g>
<rect x="99" y="584.500" width="232" height="1" fill="#444"/>

<!-- viewport geometry -->
<g fill="none">
<path d="M678.500 167V344" stroke="#5c6268" stroke-width="1"/>
<path d="M738.500 167V298.500H1047.500V167" stroke="#5c6268" stroke-width="1"/>
<path d="M450 232H590C645 232 678 285 678 344C678 403 645 456 590 456H450C395 456 364 403 364 344C364 285 395 232 450 232Z" stroke="#50565c" stroke-width=".9"/>
<rect x="477" y="292" width="89" height="105" fill="#8e959d"/>
<path d="M485 292v105M494 292v105M503 292v105M512 292v105M521 292v105M530 292v105M539 292v105M548 292v105M557 292v105M477 301h89M477 310h89M477 319h89M477 328h89M477 337h89M477 346h89M477 355h89M477 364h89M477 373h89M477 382h89M477 391h89" stroke="#7d848c" stroke-width=".5"/>
<path d="M521 292V344" stroke="#4d9a6a" stroke-width="1.200"/><path d="M521 344.500H565" stroke="#b04a4a" stroke-width="1"/>
<path d="M363 340C380 308 430 262 473 232C500 214 530 207 552 207C585 208 625 232 657 273C672 292 680 310 680 325C680 335 678 342 675 345C665 356 640 368 600 380C575 388 557 395 540 404C515 420 500 440 483 457C470 468 458 474 447 474C430 474 400 455 383 427C368 403 358 380 360 363C360 352 361 345 363 340Z" stroke="#e0404c" stroke-width="1"/>
<path d="M363 340C370 325 385 313 400 303C430 288 480 273 517 273C545 273 565 277 583 280C600 285 620 291 633 295C655 304 672 322 678 342C681 360 676 385 663 400C652 412 640 415 630 414C612 414 600 411 590 408C578 404 565 398 557 395C535 385 505 368 483 368C470 368 462 373 457 377C445 384 432 392 420 392C405 392 392 382 387 377C376 369 363 356 363 340Z" stroke="#3040b0" stroke-width="1"/>
</g>
<!-- hexagons -->
<g>
<use href="#hex" x="391" y="522"/><use href="#hex" x="503" y="522"/>
<use href="#hex" x="391" y="560"/><use href="#hex" x="503" y="560"/>
<use href="#hex" x="419" y="541"/><use href="#hex" x="475" y="541"/>
<use href="#hex" x="447" y="560"/>
<use href="#hex" x="419" y="579"/><use href="#hex" x="475" y="579"/>
<use href="#hex" x="447" y="598"/>
<use href="#hex" x="447" y="522"/>
</g>
<!-- bottom curve -->
<path d="M521 711C523 670 540 610 580 572C590 563 610 562 626 563C660 568 710 597 757 596C790 595 830 576 862 576C890 576 920 585 941 597M996 675C998 690 999 700 999 711" fill="none" stroke="#33383d" stroke-width=".9"/>
<path d="M62 665V685H82" fill="none" stroke="#ccd0d4" stroke-width="1"/>
<text x="63" y="664" style="font-size:8px;fill:#dde">y</text><text x="83" y="686" style="font-size:8px;fill:#dde">x</text>

<!-- voronoi -->
<g transform="translate(730 318) scale(.33333)">
<rect x="20" y="18" width="945" height="670" fill="#9aa2ab" stroke="#a8454d" stroke-width="3"/>
<g fill="#a84e54" stroke="#a03038" stroke-width="2">
<path d="M27 30H187L152 225 27 290Z"/>
<path d="M197 30H322L335 240 255 325 163 228Z"/>
<path d="M335 35L418 30 550 268 490 330 348 250Z"/>
<path d="M430 28H608L578 255 558 258Z"/>
<path d="M618 28H738L675 278 585 258Z"/>
<path d="M750 35H812L858 272 812 300 682 285Z"/>
<path d="M822 30H960V280L868 272Z"/>
<path d="M30 315L150 248 248 350 150 455 30 392Z"/>
<path d="M262 350L345 262 482 340V372L345 465Z"/>
<path d="M27 410L148 472 187 675H27Z"/>
<path d="M255 365L333 475 322 675H200L160 470Z"/>
<path d="M345 478L485 380 518 495 420 675H335Z"/>
<path d="M520 510L590 530 610 682H430Z"/>
<path d="M600 530L668 497 700 525 745 680H618Z"/>
<path d="M705 522L808 475 842 525 812 680H748Z"/>
<path d="M850 525L960 495V680H822Z"/>
<path d="M500 345L565 282 668 295 665 485 595 520 522 490Z"/>
<path d="M682 305L805 318 808 462 705 510 672 485Z"/>
<path d="M820 318L865 290 958 302V485L850 510 815 462Z"/>
</g>
<g fill="#f4dcdc"><circle cx="68" cy="167" r="4"/><circle cx="252" cy="218" r="4"/><circle cx="430" cy="200" r="4"/><circle cx="550" cy="102" r="4"/><circle cx="652" cy="123" r="4"/><circle cx="772" cy="168" r="4"/><circle cx="905" cy="131" r="4"/><circle cx="147" cy="350" r="4"/><circle cx="360" cy="368" r="4"/><circle cx="603" cy="437" r="4"/><circle cx="741" cy="448" r="4"/><circle cx="881" cy="441" r="4"/><circle cx="68" cy="540" r="4"/><circle cx="252" cy="488" r="4"/><circle cx="430" cy="507" r="4"/><circle cx="550" cy="604" r="4"/><circle cx="652" cy="584" r="4"/><circle cx="772" cy="538" r="4"/><circle cx="905" cy="575" r="4"/></g>
<text class="n" x="78" y="106">do</text><text class="n" x="245" y="131">re</text><text class="n" x="417" y="160">mi</text><text class="n" x="550" y="170">fa</text><text class="n" x="642" y="195">sol</text><text class="n" x="775" y="265">la</text><text class="n" x="905" y="225">si</text>
<text class="n" x="170" y="378">do#</text><text class="n" x="370" y="380">mi#</text><text class="n" x="595" y="440">fa#</text><text class="n" x="745" y="408">sol#</text><text class="n" x="903" y="408">la#</text>
<text class="n" x="78" y="610">do</text><text class="n" x="245" y="575">re</text><text class="n" x="417" y="585">mi</text><text class="n" x="517" y="662">fa</text><text class="n" x="660" y="635">sol</text><text class="n" x="775" y="585">la</text><text class="n" x="905" y="587">si</text>
</g>

<!-- popup -->
<rect x="941" y="577" width="100" height="98" fill="url(#pop)"/>
<rect x="941" y="577" width="100" height="23" fill="#c9dce9"/>
<rect x="941" y="577" width="100" height="98" fill="none" stroke="#c3cfd9"/>
<text x="947" y="592" style="font-size:9.500px;font-weight:bold;fill:#1a2030" textLength="87" lengthAdjust="spacingAndGlyphs">MRU Tool Bar Button Si...</text>
<g fill="none" stroke="#333" stroke-width=".9">
<path d="M949 606h8M949 620h8" stroke-dasharray="2 1"/><rect x="947.500" y="605" width="2.500" height="2.500"/><rect x="955" y="605" width="2.500" height="2.500"/><rect x="947.500" y="618" width="2.500" height="2.500"/><rect x="955" y="618" width="2.500" height="2.500"/>
<path d="M965 608c5 0 9 4 10 11"/><rect x="966" y="604" width="3" height="3"/><rect x="974" y="617" width="3" height="3"/>
<path d="M985 606h5c3 3 3 9 0 13h-5" stroke-dasharray="2 1"/><rect x="992" y="604" width="2.500" height="2.500"/><rect x="992" y="618" width="2.500" height="2.500"/>
<circle cx="1006" cy="610" r="5" fill="#e8d040"/><path d="M1003 614l-3 5" stroke-width="1.400"/>
<path d="M1018 620l4-14 5 14"/>
<path d="M947 636h9v-3M947 636v4h9v-4"/><rect x="965" y="628" width="11" height="11"/>
<circle cx="1005" cy="630" r="1.500"/><path d="M1019 624c5 0 9 4 10 11"/><rect x="1016" y="622" width="2.500" height="2.500"/><rect x="1027" y="634" width="2.500" height="2.500"/>
<circle cx="953" cy="650" r="6"/><path d="M953 650l4-4"/>
<path d="M966 650l3-5h6l3 5-3 5h-6Z"/><path d="M971 650h5"/>
<path d="M983 644c6 0 10 5 10 12"/><rect x="991" y="655" width="3" height="3"/>
</g>
<path d="M957 622h4v11h-4Z" fill="#1a3f9c"/>

<!-- hand-drawn yellow -->
<g fill="none" stroke="#ffee00" stroke-linecap="round" stroke-linejoin="round">
<path d="M176 664C185 648 192 628 198 615C206 630 216 650 224 665M180 651C193 650 206 647 219 646" stroke-width="5.500"/>
<path d="M505 299H535C546 298 552 303 551 309C550 316 540 317 504 318M540 318C552 320 558 326 557 331C555 340 543 344 506 344M506 299L507 346" stroke-width="8"/>
<path d="M898 567C880 563 860 566 852 578C846 592 856 606 870 608C882 609 893 604 900 597" stroke-width="6.500"/>
<path d="M1088 686C1098 684 1112 684 1116 689C1121 696 1106 700 1096 703C1108 702 1122 705 1122 713C1121 722 1100 726 1086 725" stroke-width="6"/>
<rect x="1062" y="647" width="91" height="109" rx="12" stroke-width="3.500"/>
</g>
<!-- panel right bits (peeking past the banner) -->
<path d="M1152 168h12l7 18v4h-19Z" fill="#e4e7ec" stroke="#c3c7cf" stroke-width=".6"/>
<rect x="1153" y="177" width="8" height="10" fill="#3d6eb8"/>
<text x="1161" y="185" style="font-size:9.500px;fill:#335">H..</text>
<path d="M1153 193h4l-1 10h-2Z" fill="#555"/><rect x="1162" y="193" width="6" height="10" fill="#ddd" stroke="#999" stroke-width=".5"/><path d="M1175 203l3-6 4-2M1177 194l4 4" stroke="#333" stroke-width="1.600" fill="none"/>
<rect x="1152" y="204" width="36" height="1" fill="#ddd"/>
<path d="M1160.500 205V262" stroke="#e5e5e5"/>
<text x="1164" y="216" style="font-size:9px;fill:#333" textLength="24" lengthAdjust="spacingAndGlyphs">Material</text>
<rect x="1152" y="224" width="8" height="9" fill="#000"/><rect x="1152" y="236" width="8" height="9" fill="#e01b2d"/><rect x="1152" y="249" width="8" height="9" fill="#12459c"/>
<g fill="none" stroke="#e3e3e3"><circle cx="1166" cy="228" r="3.500"/><circle cx="1166" cy="240" r="3.500"/><circle cx="1166" cy="253" r="3.500"/></g>

<!-- yellow banner + logo -->
<rect x="1062" y="36" width="90" height="576" rx="10" fill="#ffee00"/>
<g transform="translate(1040 20) scale(.33333)">
<ellipse cx="202" cy="188" rx="98" ry="100" fill="#000"/>
<path d="M206 100L272 138 283 147 280 205 272 238 205 275 182 280 125 240 125 147 168 108Z" fill="#ffee00"/>
<path d="M104 132L126 146M298 132L272 142M203 295V268" stroke="#ffee00" stroke-width="7"/>
<ellipse cx="200" cy="137" rx="38" ry="24" fill="#000"/><path d="M150 104L172 100 200 122 175 132Z" fill="#000"/>
<ellipse cx="160" cy="218" rx="25" ry="38" transform="rotate(-10 160 218)" fill="#000"/><path d="M150 245L178 240 196 280 170 278Z" fill="#000"/>
<ellipse cx="243" cy="212" rx="25" ry="36" transform="rotate(25 243 212)" fill="#000"/><path d="M240 185L285 160 285 195 262 215Z" fill="#000"/>
</g>

<!-- bottom tabs -->
<path d="M40 711L43 727H64L66 711Z" fill="#fbfbfc" stroke="#b8bdc6" stroke-width=".7"/>
<path d="M66 713V727H110L112 713ZM112 713V727H138L140 713ZM140 713V727H167L169 713ZM169 713V727H186V713Z" fill="#e6e8ee" stroke="#b8bdc6" stroke-width=".7"/>
<text class="t" x="46" y="723" textLength="13" lengthAdjust="spacingAndGlyphs">Top</text>
<text class="t" x="70" y="723" textLength="37" lengthAdjust="spacingAndGlyphs">Perspective</text>
<text class="t" x="117" y="723" textLength="18" lengthAdjust="spacingAndGlyphs">Front</text>
<text class="t" x="146" y="723" textLength="17" lengthAdjust="spacingAndGlyphs">Right</text>
<path d="M178 716v8M174 720h8" stroke="#aaa" stroke-width="2"/>

<!-- osnap row -->
<g fill="#f8f8f8" stroke="#444" stroke-width=".8">
<rect x="7.500" y="734.500" width="8" height="8"/><rect x="34.500" y="734.500" width="8" height="8"/><rect x="64.500" y="734.500" width="8" height="8"/><rect x="94.500" y="734.500" width="8" height="8"/><rect x="120.500" y="734.500" width="8" height="8"/><rect x="147.500" y="734.500" width="8" height="8"/><rect x="170.500" y="734.500" width="8" height="8"/><rect x="200.500" y="734.500" width="8" height="8"/><rect x="226.500" y="734.500" width="8" height="8"/><rect x="258.500" y="734.500" width="8" height="8"/><rect x="287.500" y="734.500" width="8" height="8"/>
</g>
<rect x="321.500" y="734.500" width="8" height="8" fill="#e0e0e0" stroke="#bbb" stroke-width=".8"/><rect x="356.500" y="734.500" width="8" height="8" fill="#e0e0e0" stroke="#bbb" stroke-width=".8"/>
<path d="M9 738l2 3 4-5M36 738l2 3 4-5M96 738l2 3 4-5M202 738l2 3 4-5M228 738l2 3 4-5" fill="none" stroke="#333"/>
<g class="o">
<text class="o" x="18" y="742" textLength="11" lengthAdjust="spacingAndGlyphs">End</text>
<text class="o" x="45" y="742" textLength="15" lengthAdjust="spacingAndGlyphs">Near</text>
<text class="o" x="75" y="742" textLength="15" lengthAdjust="spacingAndGlyphs">Point</text>
<text class="o" x="105" y="742" textLength="11" lengthAdjust="spacingAndGlyphs">Mid</text>
<text class="o" x="131" y="742" textLength="12" lengthAdjust="spacingAndGlyphs">Cen</text>
<text class="o" x="159" y="742" textLength="7" lengthAdjust="spacingAndGlyphs">Int</text>
<text class="o" x="181" y="742" textLength="14" lengthAdjust="spacingAndGlyphs">Perp</text>
<text class="o" x="210" y="742" textLength="12" lengthAdjust="spacingAndGlyphs">Tan</text>
<text class="o" x="237" y="742" textLength="16" lengthAdjust="spacingAndGlyphs">Quad</text>
<text class="o" x="269" y="742" textLength="14" lengthAdjust="spacingAndGlyphs">Knot</text>
<text class="o" x="298" y="742" textLength="19" lengthAdjust="spacingAndGlyphs">Vertex</text>
<text class="o" x="332" y="742" textLength="20" lengthAdjust="spacingAndGlyphs">Project</text>
<text class="o" x="368" y="742" textLength="22" lengthAdjust="spacingAndGlyphs">Disable</text>
</g>

<!-- status -->
<rect x="360" y="747" width="46" height="16" fill="#d8e6f1"/>
<rect x="437" y="747" width="33" height="16" fill="#d8e6f1"/><rect x="470" y="747" width="33" height="16" fill="#d8e6f1"/><rect x="503" y="747" width="52" height="16" fill="#d8e6f1"/><rect x="557" y="747" width="38" height="16" fill="#d8e6f1"/>
<path d="M144.500 747V764M198.500 747V764M252.500 747V764M360.500 747V764M406.500 747V764M436.500 747V764M470.500 747V764M503.500 747V764M556.500 747V764M596.500 747V764M664.500 747V764M691.500 747V764" stroke="#b0b5be"/>
<rect x="5" y="743" width="89" height="21" fill="#fff"/>
<path d="M21 752h5v5h-5ZM23 752v-2h5v5h-2" fill="none" stroke="#999"/><rect x="47" y="750" width="7" height="7" fill="none" stroke="#999"/><path d="M76 750l7 7M83 750l-7 7" stroke="#999"/>
<text class="s" x="99" y="759" textLength="36" lengthAdjust="spacingAndGlyphs">y -199.200</text>
<text class="s" x="158" y="759" textLength="26" lengthAdjust="spacingAndGlyphs">z 0.000</text>
<text class="s" x="207" y="759" textLength="37" lengthAdjust="spacingAndGlyphs">Millimeters</text>
<rect x="255" y="751" width="9" height="11" fill="#000"/>
<text class="s" x="265" y="759" textLength="24" lengthAdjust="spacingAndGlyphs">Default</text>
<text class="b" x="366" y="759" textLength="34" lengthAdjust="spacingAndGlyphs">Grid Snap</text>
<text class="s" x="412" y="759" textLength="19" lengthAdjust="spacingAndGlyphs">Ortho</text>
<text class="b" x="441" y="759" textLength="23" lengthAdjust="spacingAndGlyphs">Planar</text>
<text class="b" x="474" y="759" textLength="23" lengthAdjust="spacingAndGlyphs">Osnap</text>
<text class="b" x="509" y="759" textLength="41" lengthAdjust="spacingAndGlyphs">SmartTrack</text>
<text class="b" x="562" y="759" textLength="28" lengthAdjust="spacingAndGlyphs">Gumball</text>
<text class="s" x="605" y="759" textLength="51" lengthAdjust="spacingAndGlyphs">Record History</text>
<text class="s" x="669" y="759" textLength="17" lengthAdjust="spacingAndGlyphs">Filter</text>
<text class="s" x="694" y="759" textLength="54" lengthAdjust="spacingAndGlyphs">CPU use: 2.4 %</text>

<!-- taskbar -->
<rect y="764" width="1188" height="28" fill="#000"/>
<path d="M9 772l5-1v5H9ZM15 771l6-1v6h-6ZM9 777h5v5l-5-1ZM15 777h6v6l-6-1Z" fill="#fff"/>
<circle cx="46" cy="776" r="3.500" fill="none" stroke="#ddd" stroke-width="1.100"/><path d="M43.500 779l-3.500 4" stroke="#ddd" stroke-width="1.200"/>
<rect x="71" y="771" width="7" height="11" fill="none" stroke="#ddd" stroke-width="1"/><path d="M69 773v7M80 773v7" stroke="#ddd"/>
<path d="M111 779c-2 3-9 3-10-2-1-7 9-9 10-2v2h-7c0 3 4 4 7 2M104 775h4" fill="none" stroke="#1783d8" stroke-width="2.500"/>
<rect x="130" y="771" width="13" height="11" fill="#f5c84a"/><rect x="130" y="771" width="13" height="3" fill="#e8b838"/><rect x="133" y="776" width="7" height="6" fill="#3a9ad8"/>
<path d="M161 774h11v9h-11Z" fill="#fff"/><path d="M164 774v-2a2.500 2.500 0 0 1 5 0v2" fill="none" stroke="#fff"/><path d="M165 777h1.500v1.500H165ZM167.500 777H169v1.500h-1.500ZM165 779.500h1.500V781H165ZM167.500 779.500H169V781h-1.500Z" fill="#000"/>
<rect x="190" y="769" width="14" height="15" rx="2" fill="#d83040"/><rect x="192" y="774" width="10" height="8" fill="#fff"/><path d="M197 774v8M192 777h10" stroke="#d83040" stroke-width="1.400"/><path d="M194 769l3 3 3-3" fill="none" stroke="#fff"/>
<rect x="222" y="770" width="12" height="13" fill="#fff"/><rect x="220" y="771" width="8" height="11" fill="#2a5ba8"/><text x="221" y="780" style="font-size:8px;font-weight:bold;fill:#fff">W</text>
<rect x="252" y="770" width="12" height="13" fill="#fff"/><rect x="250" y="771" width="8" height="11" fill="#1f7a45"/><text x="251.500" y="780" style="font-size:8px;font-weight:bold;fill:#fff">X</text><path d="M259 773h4M259 776h4M259 779h4" stroke="#1f7a45"/>
<rect x="283" y="770" width="12" height="13" fill="#fff"/><rect x="281" y="771" width="9" height="11" fill="#d8482a"/><text x="282" y="780" style="font-size:8px;font-weight:bold;fill:#fff">P</text><rect x="284" y="770" width="12" height="2" fill="#d8482a"/>
<circle cx="318" cy="777" r="6.500" fill="#e8b830"/><path d="M318 770.500a6.500 6.500 0 0 1 6 4h-6a2.500 2.500 0 0 0-2.500 1.500l-3-3a6.500 6.500 0 0 1 5.500-2.500Z" fill="#d8382a"/><path d="M312 774a6.500 6.500 0 0 0 4 9l3-3a3 3 0 0 1-3-2Z" fill="#2a9a48"/><circle cx="318" cy="777" r="2.500" fill="#3a7ad8" stroke="#fff"/>
<rect x="334" y="764" width="28" height="28" fill="#2d2d2d"/><path d="M342 770l12 4-1 6-4 3-4-7Z" fill="#e8e8e8"/><path d="M340 777l6 6 8-3-3 5h-6Z" fill="#aaa"/>
<rect x="372" y="770" width="12" height="13" rx="1" fill="#3a8ac8"/><path d="M376 773l6 3.500-6 3.500Z" fill="#f2a030"/>
<g fill="#2a4458"><rect x="124" y="790" width="24" height="2"/><rect x="215" y="790" width="24" height="2"/><rect x="246" y="790" width="24" height="2"/><rect x="276" y="790" width="24" height="2"/><rect x="306" y="790" width="24" height="2"/><rect x="336" y="790" width="24" height="2"/><rect x="366" y="790" width="24" height="2"/></g>
<!-- tray -->
<path d="M1038 781l3.500-4 3.500 4" fill="none" stroke="#ddd"/>
<rect x="1054" y="774" width="9" height="8" fill="#ccc"/><rect x="1052" y="775" width="2" height="5" fill="#ccc"/>
<path d="M1069 784l10-10M1072 784l7-6M1075 784l4-3" stroke="#aaa" fill="none"/>
<path d="M1082 775h2l2-2v9l-2-2h-2ZM1088 775c1 2 1 4 0 6M1090 773c2 3 2 7 0 10" fill="none" stroke="#ccc"/>
<text x="1104" y="775" style="font-size:9px;fill:#ddd" text-anchor="middle" textLength="14" lengthAdjust="spacingAndGlyphs">ENG</text>
<text x="1104" y="787" style="font-size:9px;fill:#ddd" text-anchor="middle" textLength="9" lengthAdjust="spacingAndGlyphs">US</text>
<text x="1135" y="775" style="font-size:9px;fill:#ddd" text-anchor="middle" textLength="26" lengthAdjust="spacingAndGlyphs">3:49 PM</text>
<text x="1135" y="787" style="font-size:9px;fill:#ddd" text-anchor="middle" textLength="29" lengthAdjust="spacingAndGlyphs">2/6/2017</text>
<path d="M1163 771h10v9h-5l-2 2v-2h-3Z" fill="none" stroke="#ddd"/>
</svg>
</body></html>
